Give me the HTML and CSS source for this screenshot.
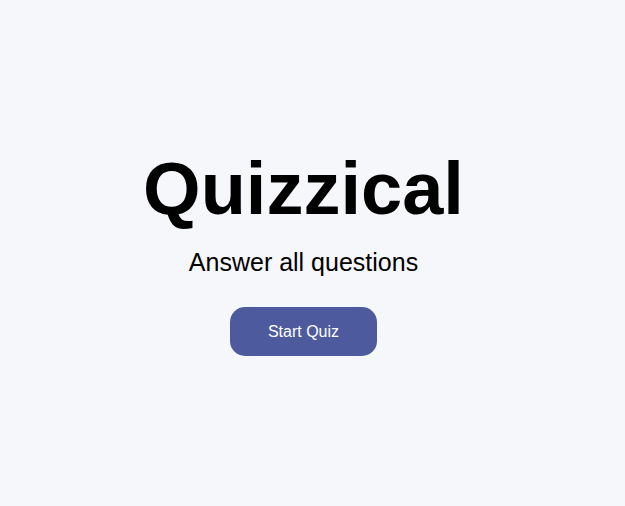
FILE: index.html
```html
<!DOCTYPE html>
<html lang="en">
<head>
<meta charset="utf-8">
<title>Quizzical</title>
<link rel="stylesheet" href="styles.css">
</head>
<body>
<main class="start">
  <h1 class="start__title">Quizzical</h1>
  <p class="start__subtitle">Answer all questions</p>
  <button class="start__button" type="button">Start Quiz</button>
</main>
</body>
</html>
```
FILE: styles.css
```css
html, body {
  margin: 0;
  padding: 0;
  background: #f5f7fb;
}
body {
  font-family: "Liberation Sans", Arial, sans-serif;
  color: #000;
}
.start {
  box-sizing: border-box;
  height: 506px;
  padding-right: 18px;
  padding-bottom: 4px;
  display: flex;
  flex-direction: column;
  align-items: center;
  justify-content: center;
}
.start__title {
  margin: 0;
  font-size: 74px;
  font-weight: 700;
  line-height: 85px;
}
.start__subtitle {
  margin: 17px 0 0;
  font-size: 25px;
  line-height: 29px;
}
.start__button {
  margin-top: 30px;
  width: 147px;
  height: 49px;
  border: none;
  border-radius: 15px;
  background: #4d5b9e;
  color: #fff;
  font-family: "Liberation Sans", Arial, sans-serif;
  font-size: 16px;
  padding: 0;
}
```
